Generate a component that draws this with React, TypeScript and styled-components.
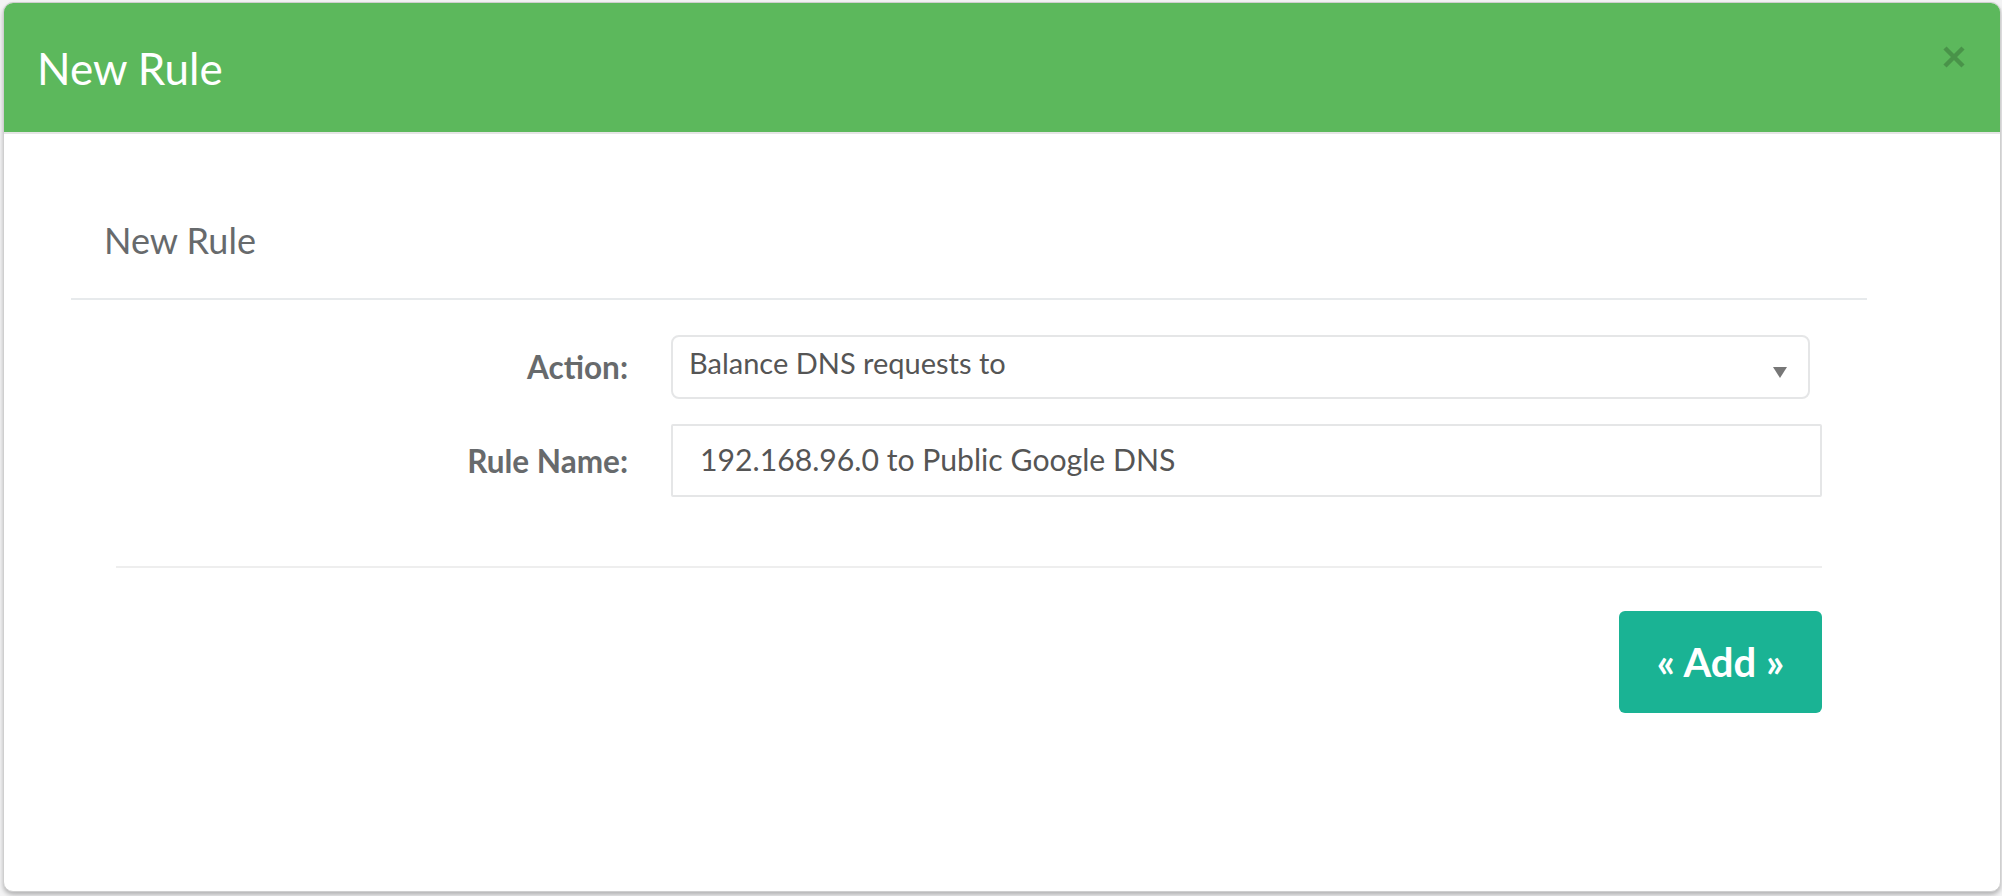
import React from "react";
import styled, { createGlobalStyle } from "styled-components";

const GlobalStyle = createGlobalStyle`
  html, body {
    margin: 0;
    padding: 0;
    background: #ffffff;
    font-family: Lato, "Open Sans", "Liberation Sans", sans-serif;
  }
`;

const Page = styled.div`
  width: 2002px;
  height: 896px;
  box-sizing: border-box;
  padding: 2px 1px 4px 3px;
  background: #f3f3f4;
`;

const Modal = styled.div`
  height: 100%;
  box-sizing: border-box;
  display: flex;
  flex-direction: column;
  background: #ffffff;
  border: 1px solid #cfcfcf;
  border-radius: 10px;
  box-shadow: 0 3px 4px rgba(0, 0, 0, 0.25);
  overflow: hidden;
`;

const Header = styled.div`
  height: 129px;
  flex: none;
  display: flex;
  align-items: center;
  justify-content: space-between;
  padding: 0 35px 0 33px;
  background: #5cb85c;
  border-bottom: 2px solid #e5e5e5;
`;

const HeaderTitle = styled.h4`
  margin: 0;
  font-size: 44px;
  font-weight: 400;
  line-height: 1;
  color: #ffffff;
`;

const CloseButton = styled.button`
  align-self: flex-start;
  margin-top: 43px;
  padding: 0;
  border: none;
  background: transparent;
  width: 22px;
  height: 22px;
  cursor: pointer;
  color: rgba(0, 0, 0, 0.2);
  display: flex;
`;

const Body = styled.div`
  flex: 1;
  padding: 88px 133px 0 67px;
`;

const PanelHeading = styled.h5`
  margin: 0;
  padding: 0 33px 40px;
  font-size: 36px;
  font-weight: 400;
  line-height: 1;
  color: #676a6c;
  border-bottom: 2px solid #e7eaec;
`;

const Form = styled.div`
  margin: 35px 45px 0;
  display: flex;
  flex-direction: column;
  gap: 25px;
`;

const Row = styled.div<{ $h: number }>`
  display: grid;
  grid-template-columns: 512px 1fr;
  column-gap: 43px;
  align-items: center;
  height: ${(p) => p.$h}px;
`;

const Label = styled.label`
  text-align: right;
  font-size: 31.5px;
  font-weight: 700;
  color: #676a6c;
`;

const SelectWrap = styled.div`
  position: relative;
  height: 100%;
  margin-right: 12px;
`;

const Select = styled.select`
  width: 100%;
  height: 100%;
  box-sizing: border-box;
  appearance: none;
  padding: 0 0 9px 16px;
  font-family: Lato, "Open Sans", "Liberation Sans", sans-serif;
  font-size: 29px;
  color: #555555;
  background: #ffffff;
  border: 2px solid #e5e6e7;
  border-radius: 8px;
  outline: none;
`;

const Arrow = styled.svg`
  position: absolute;
  right: 23px;
  top: 32px;
  pointer-events: none;
`;

const TextInput = styled.input`
  width: 100%;
  height: 100%;
  box-sizing: border-box;
  padding: 0 0 3px 27px;
  font-family: Lato, "Open Sans", "Liberation Sans", sans-serif;
  font-size: 30.2px;
  color: #555555;
  background: #ffffff;
  border: 2px solid #e5e6e7;
  border-radius: 2px;
  outline: none;
`;

const Divider = styled.hr`
  margin: 69px 45px 0;
  border: none;
  border-top: 2px solid #eeeeee;
`;

const Actions = styled.div`
  display: flex;
  justify-content: flex-end;
  margin: 43px 45px 0 0;
`;

const AddButton = styled.button`
  width: 203px;
  height: 102px;
  border: none;
  border-radius: 6px;
  background: #1ab394;
  color: #ffffff;
  font-family: Lato, "Open Sans", "Liberation Sans", sans-serif;
  font-size: 40px;
  font-weight: 700;
  cursor: pointer;
`;

export default function App() {
  return (
    <>
      <GlobalStyle />
      <Page>
        <Modal>
          <Header>
            <HeaderTitle>New Rule</HeaderTitle>
            <CloseButton aria-label="Close">
              <svg width="22" height="22" viewBox="0 0 22 22">
                <path d="M2 2 L20 20 M20 2 L2 20" stroke="currentColor" strokeWidth="4.5" />
              </svg>
            </CloseButton>
          </Header>
          <Body>
            <PanelHeading>New Rule</PanelHeading>
            <Form>
              <Row $h={64}>
                <Label>Action:</Label>
                <SelectWrap>
                  <Select defaultValue="balance">
                    <option value="balance">Balance DNS requests to</option>
                  </Select>
                  <Arrow width="14" height="11" viewBox="0 0 14 11">
                    <path d="M0 0 H14 L7 11 Z" fill="#777777" />
                  </Arrow>
                </SelectWrap>
              </Row>
              <Row $h={73}>
                <Label>Rule Name:</Label>
                <TextInput readOnly value="192.168.96.0 to Public Google DNS" />
              </Row>
            </Form>
            <Divider />
            <Actions>
              <AddButton>« Add »</AddButton>
            </Actions>
          </Body>
        </Modal>
      </Page>
    </>
  );
}
